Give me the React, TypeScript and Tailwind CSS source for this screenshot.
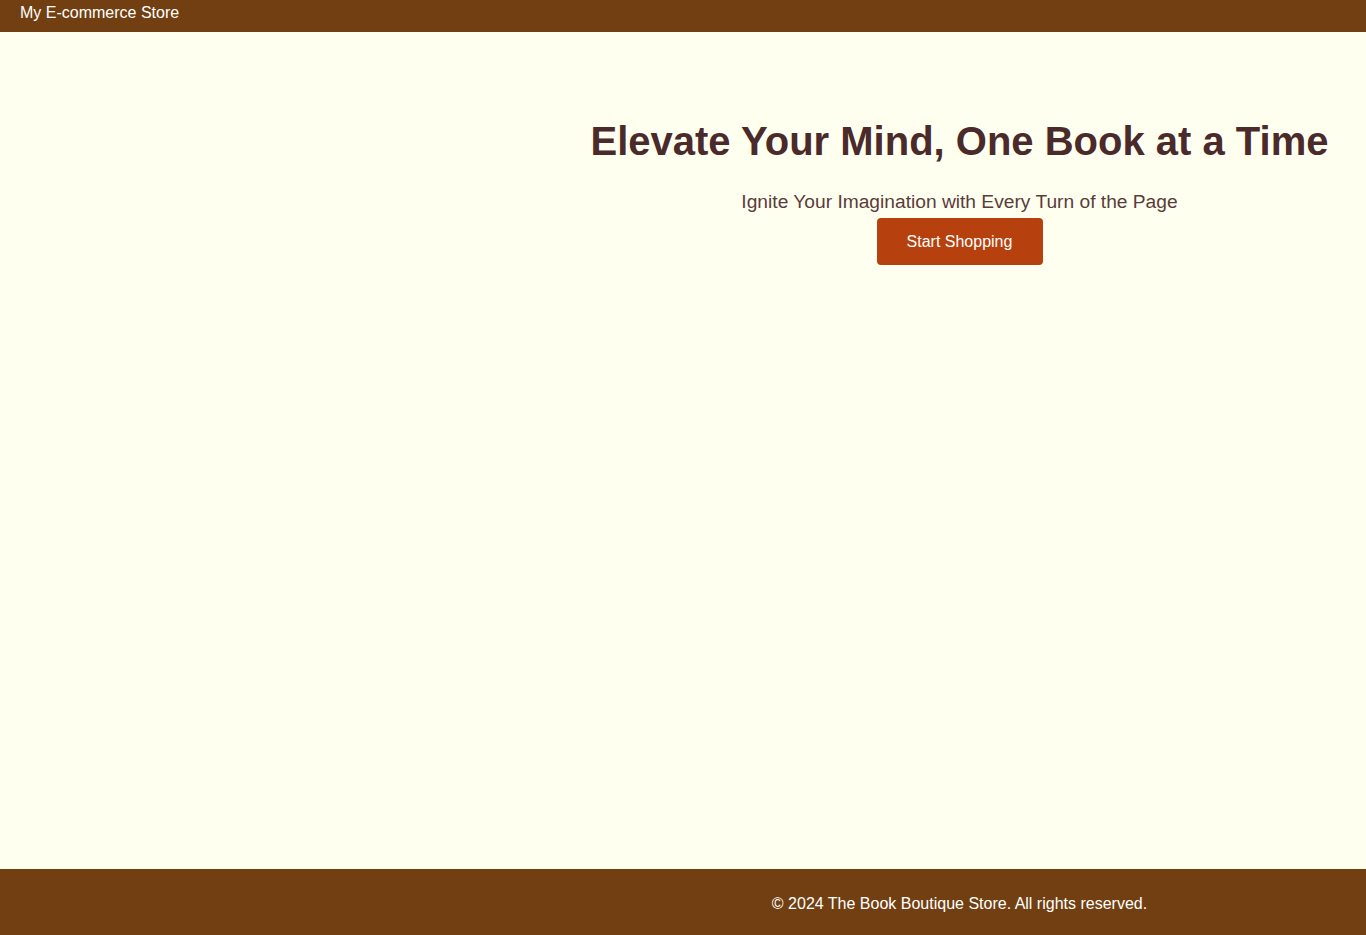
export default function App() {
  return (
    <div
      className="flex min-h-[935px] flex-col bg-[#fffff0]"
      style={{ fontFamily: '"Liberation Sans", Arial, sans-serif' }}
    >
      <header className="h-[32px] bg-[#713f12] px-[20px] pt-[4px] text-[16px] leading-[18px] text-white">
        My E-commerce Store
      </header>
      <main className="flex flex-1">
        <div className="w-[553px] shrink-0" />
        <div className="flex flex-1 flex-col items-center pt-[86px]">
          <h1 className="text-[40px] font-bold leading-[46px] text-[#4a2a2a]">
            Elevate Your Mind, One Book at a Time
          </h1>
          <p className="mt-[27px] text-[19.2px] leading-[22px] text-[#5a3c3a]">
            Ignite Your Imagination with Every Turn of the Page
          </p>
          <button className="mt-[5px] h-[47px] w-[166px] rounded-[4px] bg-[#b7410e] text-[16px] text-white">
            Start Shopping
          </button>
        </div>
      </main>
      <footer className="flex h-[66px] items-center bg-[#713f12] pt-[4px]">
        <div className="w-[553px] shrink-0" />
        <div className="flex-1 text-center text-[16px] text-white">
          © 2024 The Book Boutique Store. All rights reserved.
        </div>
      </footer>
    </div>
  );
}
